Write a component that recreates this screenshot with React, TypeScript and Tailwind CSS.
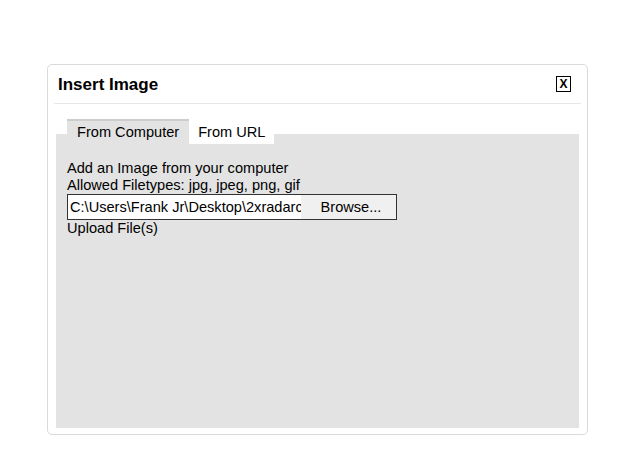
import React from 'react';

export default function App() {
  return (
    <div
      className="min-h-[472px] w-[633px] bg-white pl-[47px] pt-[64px]"
      style={{ fontFamily: '"Liberation Sans", Arial, sans-serif' }}
    >
      <div className="flex h-[371px] w-[541px] flex-col rounded-[5px] border border-[#dadada] bg-white px-[6px] pb-[6px]">
        {/* header */}
        <div className="flex h-[39px] shrink-0 items-center justify-between border-b border-[#e6e6e6] pl-[4px] pr-[10px]">
          <span className="text-[17px] font-bold leading-none text-black">Insert Image</span>
          <button className="flex h-[16px] w-[15px] items-center justify-center border border-black text-[12px] font-bold leading-none text-black">
            X
          </button>
        </div>

        {/* tabs */}
        <div className="relative z-10 mt-[15px] flex items-end pl-[13px] text-[14.6px]">
          <div className="flex h-[25px] items-center border-t-2 border-[#cdcdcd] bg-[#e3e3e3] px-[10px] text-black">
            From Computer
          </div>
          <div className="flex h-[23px] items-center bg-white px-[9px] text-black">From URL</div>
        </div>

        {/* panel */}
        <div className="mx-[2px] -mt-[10px] flex-1 bg-[#e3e3e3] pl-[11px] pt-[26px] text-[14.6px] leading-[17px] text-black">
          <div>Add an Image from your computer</div>
          <div>Allowed Filetypes: jpg, jpeg, png, gif</div>
          <div className="flex h-[26px] w-[330px] items-center border border-[#333] bg-white">
            <span className="w-[233px] overflow-hidden whitespace-nowrap pl-[2px]">
              C:\Users\Frank Jr\Desktop\2xradarchart.png
            </span>
            <span className="flex h-full flex-1 items-center justify-center bg-[#f0f0f0] pl-[5px]">Browse...</span>
          </div>
          <div>Upload File(s)</div>
        </div>
      </div>
    </div>
  );
}
